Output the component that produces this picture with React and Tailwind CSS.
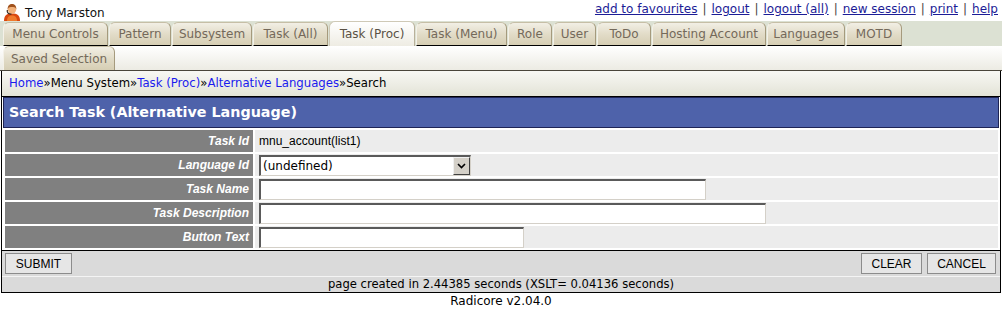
import clsx from "clsx";

const tabs = [
  { label: "Menu Controls", w: "w-[105px]" },
  { label: "Pattern", w: "w-[62px]" },
  { label: "Subsystem", w: "w-[80px]" },
  { label: "Task (All)", w: "w-[75px]" },
  { label: "Task (Proc)", w: "w-[86px]", active: true },
  { label: "Task (Menu)", w: "w-[91px]" },
  { label: "Role", w: "w-[44px]" },
  { label: "User", w: "w-[43px]" },
  { label: "ToDo", w: "w-[54px]" },
  { label: "Hosting Account", w: "w-[114px]" },
  { label: "Languages", w: "w-[78px]" },
  { label: "MOTD", w: "w-[56px]" },
];

const links = ["add to favourites", "logout", "logout (all)", "new session", "print", "help"];

const Tab = ({ label, w, active }) => (
  <div
    className={clsx(
      w,
      "flex items-center justify-center rounded-t-[6px] border text-[12px] leading-none",
      active
        ? "h-[25px] border-b-0 border-[#cfc9b6] border-r-[#b9b09a] bg-linear-to-b from-white to-[#eeece3] text-[#5a5144]"
        : "h-[24px] border-[#c6bea6] border-l-[#f4f1e8] border-r-[#a59a7d] border-b-black bg-linear-to-b from-[#f2efe5] via-[#e2dcc8] to-[#d6ceb4] text-[#74695a]"
    )}
  >
    {label}
  </div>
);

const UserIcon = () => (
  <svg width="18" height="18" viewBox="0 0 18 18">
    <path d="M1 18 C1 12 4 10.5 9 10.5 C14 10.5 17 12 17 18 Z" fill="#d9480f" />
    <path d="M4 18 C4 14 6 12.5 9 12.5 C12 12.5 14 14 14 18 Z" fill="#f07b2c" />
    <circle cx="9" cy="6.5" r="4.2" fill="#f2b27a" />
    <path d="M4.6 6.5 C4.6 2.5 6.5 1 9 1 C11.5 1 13.4 2.5 13.4 6.5 L12.6 5 C11.5 3.6 6.5 3.6 5.4 5 Z" fill="#a0521d" />
    <path d="M4.3 7 L4.3 9 M4.3 9 C5 11 7 11.2 8.5 11" stroke="#3a2a20" strokeWidth="1.2" fill="none" />
  </svg>
);

const inputCls =
  "h-[21px] bg-white border-t-2 border-l-2 border-r border-b border-t-[#5a5a5a] border-l-[#5a5a5a] border-r-[#d4d0c8] border-b-[#d4d0c8] outline-none";

const Row = ({ label, children }) => (
  <>
    <div className="h-[22px] bg-[#808080] flex items-center justify-end pr-[4px] text-white text-[12px] font-bold italic font-['Liberation_Sans',sans-serif]">
      {label}
    </div>
    <div className="h-[22px] bg-[#ececec] flex items-center pl-[4px]">{children}</div>
  </>
);

const Btn = ({ children, w }) => (
  <button className={clsx(w, "h-[21px] bg-[#e6e6e6] border border-[#8c8c8c] text-[12px] text-black font-['Liberation_Sans',sans-serif]")}>
    {children}
  </button>
);

export default function App() {
  return (
    <div className="w-[1002px] h-[309px] overflow-hidden bg-white font-['DejaVu_Sans',sans-serif] text-[12px] text-black">
      {/* header */}
      <div className="h-[21px] flex justify-between">
        <div className="flex items-end gap-[4px] pl-[3px] pt-[1px]">
          <UserIcon />
          <span className="leading-[16px] text-[#111]">Tony Marston</span>
        </div>
        <div className="pr-[4px] leading-[18px] text-[#444]">
          {links.map((l, i) => (
            <span key={l}>
              {i > 0 && <span className="mx-[5px]">|</span>}
              <a className="text-[#1c1c96] underline">{l}</a>
            </span>
          ))}
        </div>
      </div>

      {/* tabs */}
      <div className="h-[25px] flex items-end gap-[1px] pl-[3px] bg-[#dce1d3]">
        {tabs.map((t) => (
          <Tab key={t.label} {...t} />
        ))}
      </div>
      <div className="h-[25px] flex items-end pl-[3px] border-b border-[#4a453b] bg-linear-to-b from-white to-[#ecebe3]">
        <div className="w-[112px] h-[24px] flex items-center justify-center rounded-t-[6px] border border-b-0 border-[#c6bea6] border-l-[#f4f1e8] border-r-[#a59a7d] bg-linear-to-b from-[#f2efe5] via-[#e2dcc8] to-[#d6ceb4] text-[12px] text-[#74695a]">
          Saved Selection
        </div>
      </div>

      {/* breadcrumb */}
      <div className="ml-[1px] w-[1000px] h-[25px] flex items-center pl-[7px] border-x border-black bg-linear-to-b from-[#f8f8f4] to-[#e3e3d7] text-[11.7px]">
        <a className="text-[#1a1aee]">Home</a>»Menu System»<a className="text-[#1a1aee]">Task (Proc)</a>»
        <a className="text-[#1a1aee]">Alternative Languages</a>»Search
      </div>

      {/* main */}
      <div className="ml-[1px] w-[1000px] border border-black">
        <div className="mx-[1px] h-[31px] flex items-center pl-[5px] bg-[#4e62aa] border border-[#1e2456] text-white text-[14.3px] font-bold">
          Search Task (Alternative Language)
        </div>

        <div className="grid grid-cols-[248px_1fr] gap-[2px] pl-[3px] pr-[2px] py-[2px]">
          <Row label="Task Id">
            <span className="font-['Liberation_Sans',sans-serif] text-[12px]">mnu_account(list1)</span>
          </Row>
          <Row label="Language Id">
            <div className="w-[212px] h-[21px] flex bg-white border-t-2 border-l-2 border-r border-b border-t-[#5a5a5a] border-l-[#5a5a5a] border-r-[#d4d0c8] border-b-[#d4d0c8]">
              <span className="flex-1 pl-[2px] leading-[18px]">(undefined)</span>
              <div className="w-[17px] h-full flex items-center justify-center bg-[#d4d0c8] border border-[#404040] border-l-[#f0f0f0] border-t-[#f0f0f0]">
                <svg width="9" height="6" viewBox="0 0 9 6">
                  <path d="M1 1 L4.5 4.5 L8 1" stroke="#000" strokeWidth="1.6" fill="none" />
                </svg>
              </div>
            </div>
          </Row>
          <Row label="Task Name">
            <input className={clsx(inputCls, "w-[447px]")} />
          </Row>
          <Row label="Task Description">
            <input className={clsx(inputCls, "w-[507px]")} />
          </Row>
          <Row label="Button Text">
            <input className={clsx(inputCls, "w-[265px]")} />
          </Row>
        </div>

        <div className="h-[26px] flex items-center justify-between pl-[3px] pr-[4px] border-t border-black bg-[#dadada]">
          <Btn w="w-[67px]">SUBMIT</Btn>
          <div className="flex gap-[5px]">
            <Btn w="w-[61px]">CLEAR</Btn>
            <Btn w="w-[69px]">CANCEL</Btn>
          </div>
        </div>
        <div className="h-[16px] flex items-center justify-center border-t border-[#f4f4f4] bg-[#dadada] text-[11.6px]">
          page created in 2.44385 seconds (XSLT= 0.04136 seconds)
        </div>
      </div>

      <div className="h-[15px] flex items-center justify-center">Radicore v2.04.0</div>
    </div>
  );
}
